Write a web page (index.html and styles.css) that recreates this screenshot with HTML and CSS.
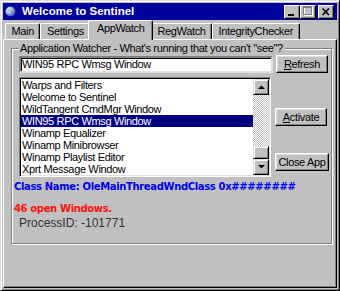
FILE: index.html
```html
<!DOCTYPE html>
<html lang="en">
<head>
  <meta charset="UTF-8" />
  <title>Welcome to Sentinel</title>
  <link rel="stylesheet" href="styles.css">
</head>
<body>
  <div class="window">
    <div class="titlebar">
      <svg class="app-icon" viewBox="0 0 11 11">
        <defs>
          <radialGradient id="globe" cx="0.35" cy="0.35" r="0.7">
            <stop offset="0" stop-color="#ffffff" />
            <stop offset="0.45" stop-color="#9fb4e8" />
            <stop offset="1" stop-color="#3a4fa0" />
          </radialGradient>
        </defs>
        <circle cx="5.5" cy="5.5" r="5" fill="url(#globe)" />
        <path d="M3 4 Q5 3 6 5 T8 7" fill="none" stroke="#5a6fb8" stroke-width="0.8" />
      </svg>
      <span class="title">Welcome to Sentinel</span>
      <div class="title-buttons">
        <div class="tb-btn">
          <svg viewBox="0 0 16 14"><rect x="4" y="9" width="6" height="2" fill="#000" /></svg>
        </div>
        <div class="tb-btn">
          <svg viewBox="0 0 16 14">
            <rect x="4.5" y="2.5" width="8" height="8" fill="none" stroke="#fff" />
            <rect x="3.5" y="1.5" width="8" height="8" fill="none" stroke="#808080" />
            <rect x="3" y="1" width="9" height="2" fill="#808080" />
          </svg>
        </div>
        <div class="tb-btn close">
          <svg viewBox="0 0 16 14"><path d="M4.5 3.5 L11 10 M11 3.5 L4.5 10" stroke="#000" stroke-width="1.6" /></svg>
        </div>
      </div>
    </div>

    <div class="tabs">
      <div class="tab">Main</div>
      <div class="tab">Settings</div>
      <div class="tab active">AppWatch</div>
      <div class="tab">RegWatch</div>
      <div class="tab">IntegrityChecker</div>
    </div>

    <div class="panel">
      <div class="group">
        <span class="group-label">Application Watcher - What's running that you can't "see"?</span>

        <div class="row">
          <div class="textbox">WIN95 RPC Wmsg Window</div>
          <button class="btn refresh"><u>R</u>efresh</button>
        </div>

        <div class="row list-row">
          <div class="listbox">
            <ul class="items">
              <li>Warps and Filters</li>
              <li>Welcome to Sentinel</li>
              <li>WildTangent CmdMgr Window</li>
              <li class="selected">WIN95 RPC Wmsg Window</li>
              <li>Winamp Equalizer</li>
              <li>Winamp Minibrowser</li>
              <li>Winamp Playlist Editor</li>
              <li>Xprt Message Window</li>
            </ul>
            <div class="scrollbar">
              <div class="sb-btn">
                <svg viewBox="0 0 7 4"><polygon points="0,4 7,4 3.5,0.5" fill="#000" /></svg>
              </div>
              <div class="sb-track"><div class="sb-thumb"></div></div>
              <div class="sb-btn">
                <svg viewBox="0 0 7 4"><polygon points="0,0 7,0 3.5,3.5" fill="#000" /></svg>
              </div>
            </div>
          </div>
          <div class="side-buttons">
            <button class="btn activate"><u>A</u>ctivate</button>
            <button class="btn close-app">Close App</button>
          </div>
        </div>

        <div class="class-name">Class Name: OleMainThreadWndClass 0x########</div>
        <div class="count">46 open Windows.</div>
        <div class="pid">ProcessID: -101771</div>
      </div>
    </div>
  </div>
</body>
</html>
```

FILE: styles.css
```css
html, body {
  margin: 0;
  padding: 0;
}
body {
  font-family: "Liberation Sans", Arial, sans-serif;
  font-size: 11px;
  letter-spacing: -0.35px;
  color: #000;
  background: #c0c0c0;
}

/* window frame */
.window {
  width: 340px;
  height: 291px;
  box-sizing: border-box;
  display: flex;
  flex-direction: column;
  background: #c0c0c0;
  border: 1px solid;
  border-color: #dfdfdf #000 #000 #dfdfdf;
  box-shadow: inset 1px 1px #fff, inset -1px -1px #808080;
  padding: 2px;
}
.titlebar {
  flex: none;
  height: 17px;
  display: flex;
  align-items: center;
  padding: 0 3px 0 2px;
  background: #00009a;
  color: #fff;
}
.app-icon {
  width: 11px;
  height: 11px;
  margin-right: 6px;
  flex: none;
}
.title {
  flex: 1;
  font-weight: bold;
  font-size: 11.5px;
  letter-spacing: 0;
  line-height: 17px;
}
.title-buttons { display: flex; }
.tb-btn {
  width: 16px;
  height: 14px;
  box-sizing: border-box;
  background: #c0c0c0;
  border: 1px solid;
  border-color: #fff #000 #000 #fff;
  box-shadow: inset -1px -1px #808080;
}
.tb-btn svg {
  display: block;
  width: 16px;
  height: 14px;
  margin: -1px 0 0 -1px;
}
.tb-btn.close { margin-left: 2px; }

/* tabs */
.tabs {
  flex: none;
  height: 19px;
  display: flex;
  align-items: flex-end;
  padding-left: 2px;
}
.tab {
  height: 16px;
  box-sizing: border-box;
  padding: 0 5.5px;
  line-height: 15px;
  border: 1px solid;
  border-bottom: 0;
  border-color: #fff #000 #000 #fff;
  border-radius: 2px 2px 0 0;
  box-shadow: inset -1px 0 #808080;
}
.tab.active {
  height: 20px;
  margin: 0 -2px -1px;
  padding: 0 7.5px;
  position: relative;
  z-index: 1;
  background: #c0c0c0;
}

/* tab page */
.panel {
  flex: 1;
  border: 1px solid;
  border-color: #fff #000 #000 #fff;
  box-shadow: inset -1px -1px #808080;
}
.group {
  position: relative;
  margin: 8px 4px 0 7px;
  padding: 6px 2px 13px 2px;
  border: 1px solid #808080;
  box-shadow: inset 1px 1px #fff, 1px 1px #fff;
}
.group-label {
  position: absolute;
  top: -7px;
  left: 6px;
  padding: 0 2px;
  line-height: 13px;
  background: #c0c0c0;
  white-space: nowrap;
}

.row {
  display: flex;
  align-items: center;
  margin-left: 5px;
}
.textbox {
  width: 254px;
  height: 17px;
  box-sizing: border-box;
  padding-left: 1px;
  line-height: 13px;
  background: #fff;
  border: 2px solid;
  border-color: #808080 #dfdfdf #dfdfdf #808080;
  box-shadow: inset 1px 1px #000;
}

.btn {
  font: inherit;
  letter-spacing: inherit;
  color: #000;
  height: 18px;
  padding: 0;
  background: #c0c0c0;
  border: 1px solid;
  border-color: #fff #000 #000 #fff;
  box-shadow: inset -1px -1px #808080, inset 1px 1px #dfdfdf;
}
.refresh {
  flex: 1;
  margin-left: 3px;
  margin-right: 1px;
}

.list-row {
  align-items: flex-start;
  margin-top: 4px;
}
.listbox {
  width: 253px;
  height: 100px;
  box-sizing: border-box;
  display: flex;
  padding: 1px;
  background: #fff;
  border: 1px solid;
  border-color: #808080 #fff #fff #808080;
  box-shadow: inset 1px 1px #000, inset -1px -1px #dfdfdf;
}
.items {
  flex: 1;
  margin: 0;
  padding: 0;
  list-style: none;
  line-height: 12px;
  white-space: nowrap;
}
.items li { padding-left: 1px; }
.items .selected {
  background: #000080;
  color: #fff;
}
.scrollbar {
  width: 16px;
  display: flex;
  flex-direction: column;
}
.sb-btn {
  height: 16px;
  box-sizing: border-box;
  display: flex;
  align-items: center;
  justify-content: center;
  background: #c0c0c0;
  border: 1px solid;
  border-color: #dfdfdf #000 #000 #dfdfdf;
  box-shadow: inset 1px 1px #fff, inset -1px -1px #808080;
}
.sb-btn svg {
  width: 7px;
  height: 4px;
}
.sb-track {
  flex: 1;
  display: flex;
  flex-direction: column;
  justify-content: flex-end;
  background: repeating-conic-gradient(#c0c0c0 0 25%, #fff 0 50%) 0 0 / 2px 2px;
}
.sb-thumb {
  height: 13px;
  box-sizing: border-box;
  background: #c0c0c0;
  border: 1px solid;
  border-color: #dfdfdf #000 #000 #dfdfdf;
  box-shadow: inset 1px 1px #fff, inset -1px -1px #808080;
}

.side-buttons {
  display: flex;
  flex-direction: column;
  align-items: flex-start;
  margin-left: 4px;
}
.activate {
  width: 52px;
  margin-top: 31px;
}
.close-app {
  width: 54px;
  margin-top: 27px;
}

.class-name,
.count {
  font-family: "DejaVu Sans", sans-serif;
  font-weight: bold;
  font-size: 10px;
  letter-spacing: -0.35px;
}
.class-name {
  margin-top: 3px;
  line-height: 13px;
  color: #0000f0;
}
.count {
  margin-top: 10px;
  line-height: 12px;
  color: #ff1010;
}
.pid {
  margin: 1px 0 0 5px;
  font-size: 12px;
  letter-spacing: 0;
  line-height: 14px;
  color: #333;
}
```
